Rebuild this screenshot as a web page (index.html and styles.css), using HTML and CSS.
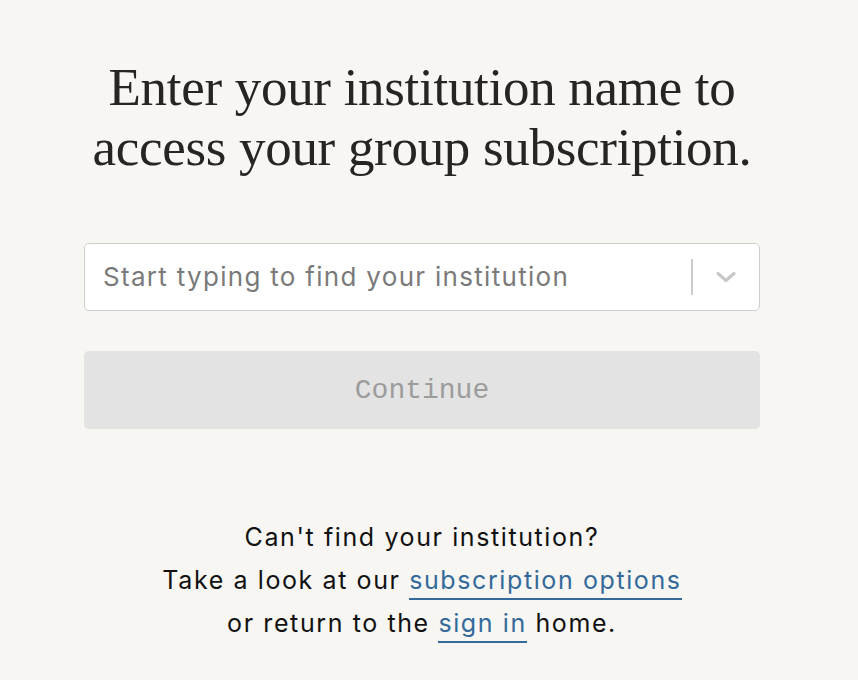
FILE: index.html
```html
<!DOCTYPE html>
<html lang='en'>
<head>
  <meta charset='UTF-8'>
  <meta name='viewport' content='width=device-width, initial-scale=1.0'>
  <title>Group subscription</title>
  <link rel="stylesheet" href="styles.css">
</head>
<body>
<main class='panel'>
  <h1 class='title'>Enter your institution name to<br>access your group subscription.</h1>

  <div class='select'>
    <input class='select-input' type='text' placeholder='Start typing to find your institution'>
    <span class='select-sep'></span>
    <span class='select-arrow'>
      <svg width='22' height='22' viewBox='0 0 22 22'>
        <path d='M3 7.5 L11 14.5 L19 7.5' fill='none' stroke='#c8c8c8' stroke-width='3.2' stroke-linecap='round' stroke-linejoin='round'/>
      </svg>
    </span>
  </div>

  <button class='continue' disabled>Continue</button>

  <p class='help'>
    Can't find your institution?<br>
    Take a look at our <a href='#'>subscription options</a><br>
    or return to the <a href='#'>sign in</a> home.
  </p>
</main>
</body>
</html>
```

FILE: styles.css
```css
body {
    margin: 0;
    padding: 0;
    background-color: #f7f6f2;
    font-family: Inter, "Noto Sans", sans-serif;
}

.panel {
    width: 676px;
    margin-left: 84px;
    padding-top: 57px;
}

.title {
    margin: 0 -20px 66px;
    font-family: "Liberation Serif", serif;
    font-weight: normal;
    font-size: 53px;
    letter-spacing: -0.3px;
    line-height: 60px;
    white-space: nowrap;
    text-align: center;
    color: #262522;
}

.select {
    display: flex;
    align-items: center;
    height: 66px;
    background-color: #fff;
    border: 1px solid #cfcfcf;
    border-radius: 5px;
}

.select-input {
    flex: 1;
    min-width: 0;
    border: none;
    outline: none;
    background: transparent;
    padding: 0 0 2px 18px;
    font-family: inherit;
    font-size: 26px;
    letter-spacing: 1.3px;
    color: #333;
}

.select-input::placeholder {
    color: #7a7a7a;
}

.select-sep {
    width: 2px;
    height: 36px;
    background-color: #cccccc;
}

.select-arrow {
    display: flex;
    align-items: center;
    justify-content: center;
    width: 66px;
}

.continue {
    display: block;
    width: 100%;
    height: 78px;
    margin-top: 40px;
    border: none;
    border-radius: 5px;
    background-color: #e3e3e3;
    font-family: "Liberation Mono", monospace;
    font-size: 28px;
    color: #9c9c9c;
}

.help {
    margin: 87px 0 0;
    font-size: 25px;
    letter-spacing: 1.6px;
    line-height: 43px;
    text-align: center;
    color: #111;
}

.help a {
    color: #336a9a;
    text-decoration: none;
    border-bottom: 2px solid #336a9a;
    padding-bottom: 3px;
}
```
